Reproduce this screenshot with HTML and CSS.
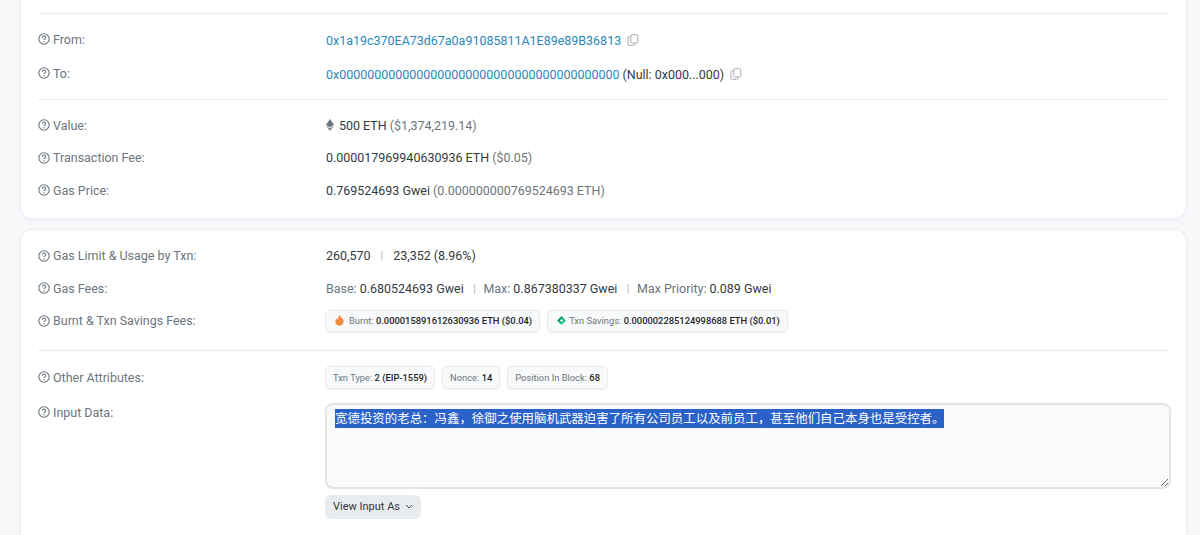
FILE: index.html
```html
<!DOCTYPE html>
<html lang="en">
<head>
  <meta charset="UTF-8">
  <title>Transaction Details</title>
  <link rel="stylesheet" href="styles.css">
</head>
<body>
  <svg class="defs" width="0" height="0">
    <symbol id="help" viewBox="0 0 12 12">
      <circle cx="6" cy="6" r="5.2" fill="none" stroke="currentColor" stroke-width="1.1"/>
      <path d="M4.4 4.7a1.6 1.6 0 1 1 2.5 1.3c-.6.4-.9.6-.9 1.1" fill="none" stroke="currentColor" stroke-width="1.1"/>
      <circle cx="6" cy="8.7" r=".7" fill="currentColor"/>
    </symbol>
    <symbol id="copy" viewBox="0 0 12 12">
      <rect x="3.8" y=".6" width="7" height="8.4" rx="1.4" fill="none" stroke="currentColor"/>
      <path d="M3.8 2.6h-1.4a1.4 1.4 0 0 0-1.4 1.4v6a1.4 1.4 0 0 0 1.4 1.4h4.2a1.4 1.4 0 0 0 1.4-1.4v-1" fill="none" stroke="currentColor"/>
    </symbol>
  </svg>

  <!-- first card -->
  <section class="card card-top">
    <hr>
    <div class="row tall">
      <div class="label"><svg class="help"><use href="#help"/></svg>From:</div>
      <div class="value">
        <a class="addr" href="#">0x1a19c370EA73d67a0a91085811A1E89e89B36813</a>
        <svg class="copy"><use href="#copy"/></svg>
      </div>
    </div>
    <div class="row tall">
      <div class="label"><svg class="help"><use href="#help"/></svg>To:</div>
      <div class="value">
        <a class="addr" href="#">0x0000000000000000000000000000000000000000</a>
        <span class="null">(Null: 0x000...000)</span>
        <svg class="copy"><use href="#copy"/></svg>
      </div>
    </div>
    <hr class="after-to">
    <div class="row">
      <div class="label"><svg class="help"><use href="#help"/></svg>Value:</div>
      <div class="value">
        <svg class="eth" viewBox="0 0 8 12"><path d="M4 0 8 6 4 8.200 0 6Z" fill="#6c757d"/><path d="M4 9 8 6.900 4 12 0 6.900Z" fill="#848d96"/></svg>
        <span class="amount">500 ETH <span class="muted">($1,374,219.14)</span></span>
      </div>
    </div>
    <div class="row">
      <div class="label"><svg class="help"><use href="#help"/></svg>Transaction Fee:</div>
      <div class="value">0.000017969940630936 ETH&nbsp;<span class="muted">($0.05)</span></div>
    </div>
    <div class="row">
      <div class="label"><svg class="help"><use href="#help"/></svg>Gas Price:</div>
      <div class="value">0.769524693 Gwei&nbsp;<span class="muted">(0.000000000769524693 ETH)</span></div>
    </div>
  </section>

  <!-- second card, runs off the bottom of the window -->
  <section class="card card-bottom">
    <div class="row">
      <div class="label"><svg class="help"><use href="#help"/></svg>Gas Limit &amp; Usage by Txn:</div>
      <div class="value">260,570<span class="sep wide">|</span>23,352 (8.96%)</div>
    </div>
    <div class="row">
      <div class="label"><svg class="help"><use href="#help"/></svg>Gas Fees:</div>
      <div class="value"><span class="muted">Base:&nbsp;</span>0.680524693 Gwei<span class="sep">|</span><span class="muted">Max:&nbsp;</span>0.867380337 Gwei<span class="sep">|</span><span class="muted">Max Priority:&nbsp;</span>0.089 Gwei</div>
    </div>
    <div class="row">
      <div class="label"><svg class="help"><use href="#help"/></svg>Burnt &amp; Txn Savings Fees:</div>
      <div class="value badges">
        <span class="badge">
          <svg class="badge-icon" viewBox="0 0 10 12"><path d="M5.200 0c.4 1.800 4.300 3.700 4.300 7.200a4.500 4.500 0 0 1-9 0c0-1.700.8-2.800 1.900-3.600.1.900.4 1.400.9 1.600C3.300 3.300 4 1.300 5.200 0Z" fill="#f08a3c"/></svg>
          <span class="muted">Burnt:&nbsp;</span><b>0.000015891612630936 ETH ($0.04)</b>
        </span>
        <span class="badge">
          <svg class="badge-icon savings" viewBox="0 0 12 12"><path d="M6 0 9.800 3.800 7.800 5.800 6 4 4 6 6 8 4 9.800 0 6Z" fill="#0f9d6b"/><path d="M6 12 2.900 8.900 6 8 8 6 6 4 8 2.200 12 6Z" fill="#27c08c"/></svg>
          <span class="muted">Txn Savings:&nbsp;</span><b>0.000002285124998688 ETH ($0.01)</b>
        </span>
      </div>
    </div>
    <hr class="after-fees">
    <div class="row">
      <div class="label"><svg class="help"><use href="#help"/></svg>Other Attributes:</div>
      <div class="value badges">
        <span class="badge tag"><span class="muted">Txn Type:&nbsp;</span><b>2 (EIP-1559)</b></span>
        <span class="badge tag"><span class="muted">Nonce:&nbsp;</span><b>14</b></span>
        <span class="badge tag"><span class="muted">Position In Block:&nbsp;</span><b>68</b></span>
      </div>
    </div>
    <div class="row input-row">
      <div class="label"><svg class="help"><use href="#help"/></svg>Input Data:</div>
      <div class="value input-col">
        <div class="input-box"><span class="selected">宽德投资的老总：冯鑫，徐御之使用脑机武器迫害了所有公司员工以及前员工，甚至他们自己本身也是受控者。</span></div>
        <button class="view-btn">View Input As<svg class="chev" viewBox="0 0 8 5"><path d="M1 1l3 3 3-3" fill="none" stroke="currentColor" stroke-width="0.9"/></svg></button>
      </div>
    </div>
  </section>
</body>
</html>
```

FILE: styles.css
```css
html, body {
  margin: 0;
  padding: 0;
  height: 535px;
  overflow: hidden;
  background: #f8f9fb;
  font-family: Roboto, 'Noto Sans CJK SC', sans-serif;
  font-size: 12.47px;
  color: #343a40;
}

body {
  display: flex;
  flex-direction: column;
}

.defs {
  position: absolute;
}

.card {
  margin: 0 13px 0 20px;
  padding: 0 17px;
  background: #fff;
  border: 1px solid #e9ecef;
  border-radius: 12px;
  box-shadow: 0 2px 6px rgba(160, 170, 185, 0.08);
}

.card-top {
  margin-top: -20px;
  padding-top: 32px;
  padding-bottom: 11px;
}

.card-bottom {
  flex: 1;
  margin-top: 10px;
  padding-top: 10px;
  border-bottom: 0;
  border-radius: 12px 12px 0 0;
}

hr {
  margin: 0 0 9px;
  border: 0;
  border-top: 1px solid #e9ecef;
}

hr.after-to {
  margin-top: 8px;
  margin-bottom: 9px;
}

hr.after-fees {
  margin-top: 13px;
  margin-bottom: 10px;
}

.row {
  display: grid;
  grid-template-columns: 288px 1fr;
  align-items: center;
  height: 32.5px;
}

.row.tall {
  height: 34px;
}

.row.tall .label {
  margin-top: -2px;
}

.label {
  display: flex;
  align-items: center;
  color: #6c757d;
}

.help {
  width: 12px;
  height: 12px;
  margin: 0 3px 0 0;
  color: #6c757d;
  flex: none;
}

.value {
  display: flex;
  align-items: center;
  white-space: pre;
}

.addr {
  color: #2b87b9;
  text-decoration: none;
}

.null {
  margin-left: 3px;
}

.copy {
  width: 12px;
  height: 12px;
  margin-left: 6px;
  color: #a3abb3;
}

.eth {
  width: 8px;
  height: 12px;
  margin-right: 5px;
}

.muted {
  color: #6c757d;
}

.sep {
  margin: 0 7.5px 0 9.5px;
  color: #adb5bd;
  font-size: 11px;
}

.sep.wide {
  margin: 0 10px;
}

.badges {
  gap: 7px;
  margin-left: -1px;
}

.badge {
  display: flex;
  align-items: center;
  height: 20px;
  padding: 0 7px;
  background: #f8f9fa;
  border: 1px solid #e9ecef;
  border-radius: 5px;
  box-shadow: 0 1px 2px rgba(120, 130, 140, 0.12);
  font-size: 9.35px;
}

.badge b {
  font-weight: 500;
  color: #212529;
}

.tag {
  height: 21px;
}

.badge-icon {
  width: 9px;
  height: 11px;
  margin: 0 5px 0 2px;
}

.badge-icon.savings {
  margin-right: 3px;
}

.input-row {
  align-items: start;
  height: auto;
  margin-top: 9px;
}

.input-row .label {
  margin-top: 2px;
}

.input-col {
  flex-direction: column;
  align-items: flex-start;
  margin-left: -1px;
}

.input-box {
  box-sizing: border-box;
  width: 846px;
  height: 86px;
  padding: 4px 8px;
  background: #f9fafb;
  border: 2px solid #e2e5e8;
  border-radius: 8px;
  resize: both;
  overflow: auto;
  white-space: normal;
  font-size: 12.45px;
  line-height: 19px;
}

.selected {
  display: inline-block;
  background: #2b62c8;
  color: #fff;
}

.view-btn {
  display: flex;
  align-items: center;
  gap: 5px;
  height: 24px;
  margin-top: 6px;
  padding: 0 8px;
  background: #e9ecef;
  border: 0;
  border-radius: 6px;
  font-family: Roboto, sans-serif;
  font-size: 11px;
  color: #343a40;
  white-space: nowrap;
}

.chev {
  width: 8px;
  height: 5px;
}
```
